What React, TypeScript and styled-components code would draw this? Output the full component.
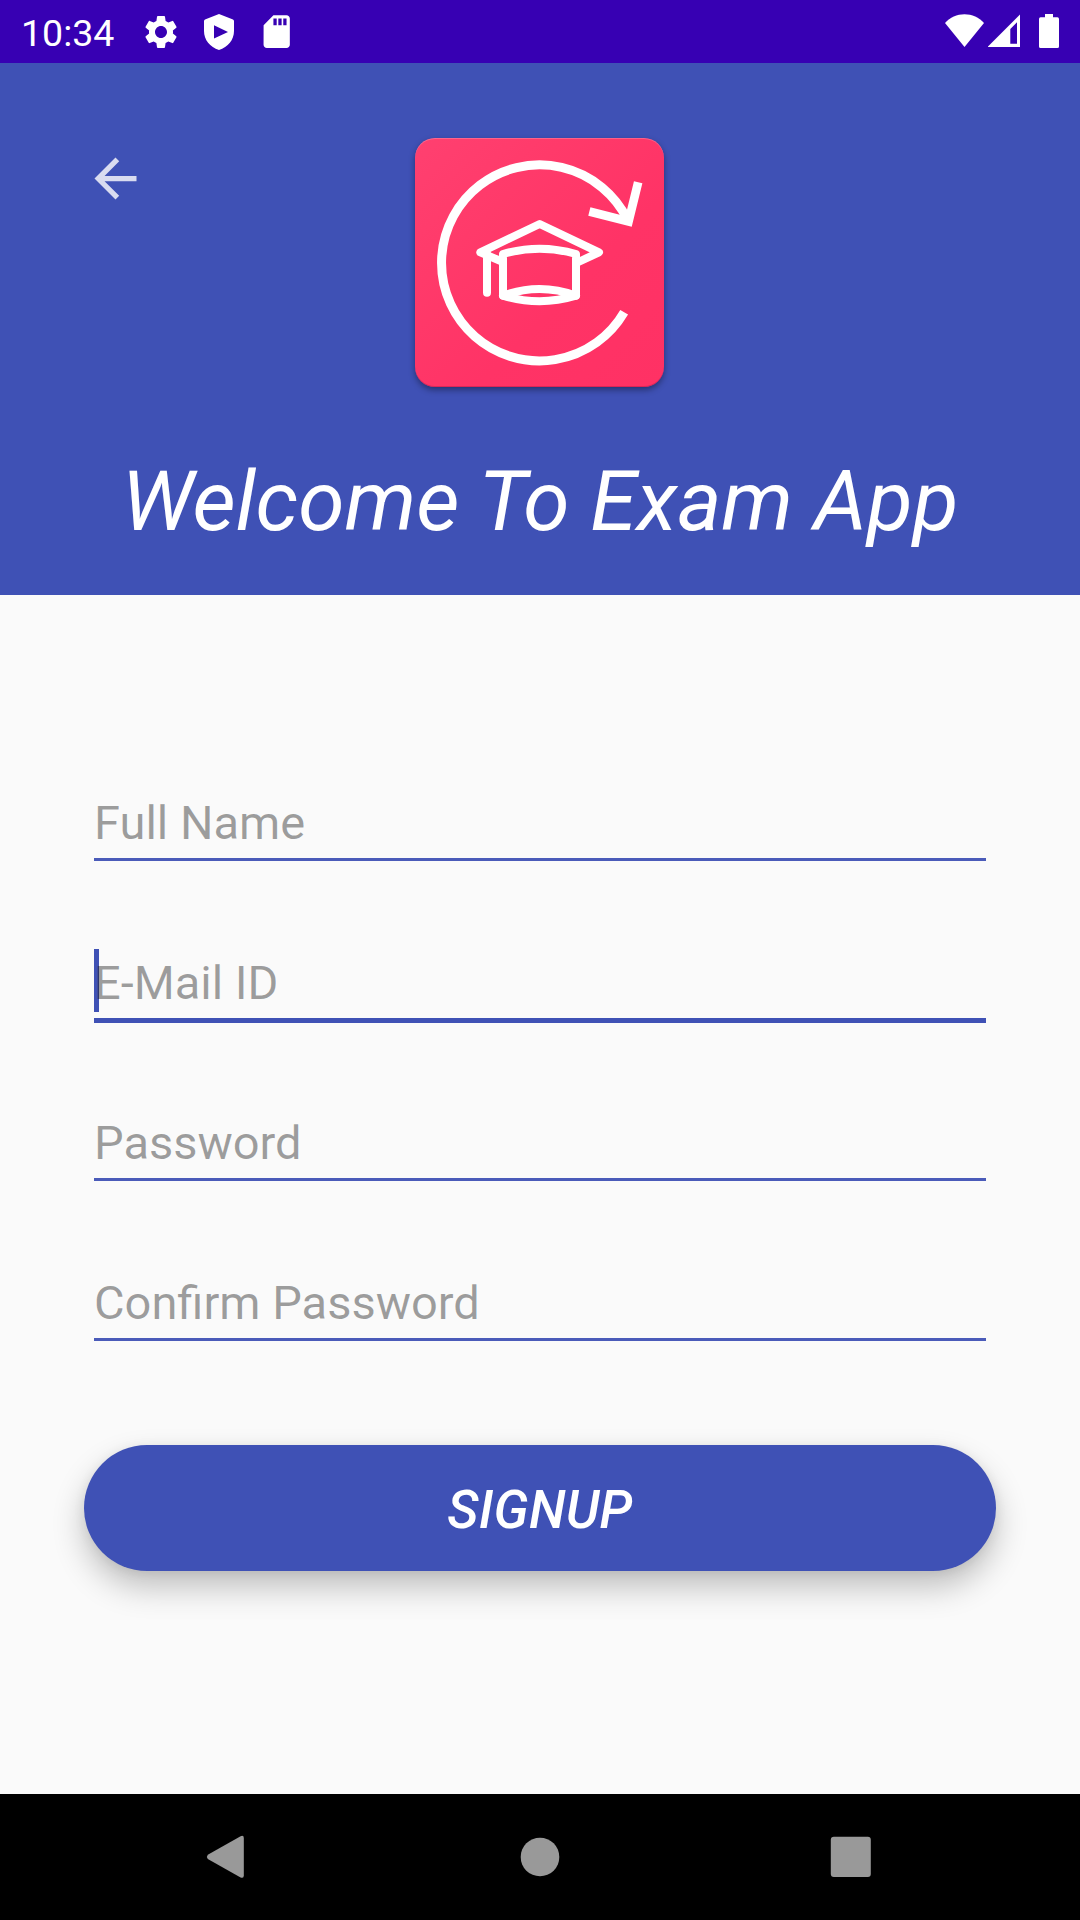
import React from "react";
import styled, { createGlobalStyle } from "styled-components";
import { MdArrowBack, MdSdCard, MdSettings } from "react-icons/md";

const indigo = "#3f51b5";

const GlobalStyle = createGlobalStyle`
  * { box-sizing: border-box; }
  body { margin: 0; background: #fafafa; }
`;

const Screen = styled.div`
  width: 1080px;
  height: 1920px;
  display: flex;
  flex-direction: column;
  overflow: hidden;
  background: #fafafa;
  font-family: Roboto, "Liberation Sans", sans-serif;
`;

const StatusBar = styled.div`
  flex: none;
  height: 63px;
  padding: 0 21px 0 21px;
  display: flex;
  justify-content: space-between;
  background: #3700b3;
  color: #fff;
`;

const StatusGroup = styled.div`
  display: flex;
  align-items: flex-start;
`;

const Clock = styled.span`
  width: 120px;
  padding-top: 11px;
  font-size: 37.5px;
  line-height: 44px;
`;

const StatusIcon = styled.span<{ $top: number; $gap?: number }>`
  display: flex;
  margin-top: ${(p) => p.$top}px;
  margin-right: ${(p) => p.$gap ?? 0}px;
`;

const Header = styled.header`
  flex: none;
  height: 532px;
  padding: 75px 84px 0;
  display: grid;
  grid-template-columns: 63px 1fr 63px;
  grid-template-rows: 249px auto;
  background: ${indigo};
`;

const BackButton = styled.button`
  width: 63px;
  height: 63px;
  margin-top: 9px;
  padding: 0;
  border: 0;
  background: none;
  color: #d9dcf0;
  display: flex;
`;

const LogoTile = styled.div`
  justify-self: center;
  width: 249px;
  height: 249px;
  margin-right: 1px;
  border-radius: 20px;
  background: linear-gradient(135deg, #ff4070 0%, #ff3a6a 30%, #ff3366 62%, #ff3164 100%);
  box-shadow: 0 3px 6px rgba(0, 0, 0, 0.38), inset 0 1px 0 rgba(255, 255, 255, 0.2),
    inset 0 -1px 0 rgba(120, 0, 40, 0.25);
`;

const Title = styled.h1`
  grid-column: 1 / -1;
  margin: 66px 0 0;
  text-align: center;
  white-space: nowrap;
  color: #fff;
  font-size: 84px;
  line-height: 98px;
  font-weight: 400;
  font-style: italic;
  letter-spacing: 0.05px;
`;

const Form = styled.form`
  flex: 1;
  padding: 186px 84px 0;
  display: flex;
  flex-direction: column;
`;

const Field = styled.label<{ $focused?: boolean }>`
  position: relative;
  flex: none;
  height: 160px;
  margin: 0 10px;
  display: flex;
  flex-direction: column;

  &::before {
    content: "";
    display: ${(p) => (p.$focused ? "block" : "none")};
    position: absolute;
    left: 0;
    top: 8px;
    width: 5px;
    height: 63px;
    background: ${indigo};
  }
`;

const Hint = styled.span`
  position: relative;
  height: 77px;
  padding-top: 14px;
  font-size: 47px;
  line-height: 56px;
  color: rgba(0, 0, 0, 0.38);
`;

const Underline = styled.span<{ $focused?: boolean }>`
  height: ${(p) => (p.$focused ? 5 : 3)}px;
  background: ${(p) => (p.$focused ? indigo : "#4a5bb9")};
`;

const SubmitButton = styled.button`
  flex: none;
  height: 126px;
  margin-top: 24px;
  padding: 4px 0 0;
  border: 0;
  border-radius: 63px;
  background: ${indigo};
  color: #fff;
  font: italic 500 53px/62px Roboto, "Liberation Sans", sans-serif;
  letter-spacing: 0.3px;
  box-shadow: 0 16px 32px rgba(0, 0, 0, 0.24), 0 2px 12px rgba(0, 0, 0, 0.07);
`;

const NavBar = styled.nav`
  flex: none;
  height: 126px;
  padding: 0 202px;
  display: flex;
  align-items: center;
  justify-content: space-between;
  background: #000;
`;

const ShieldIcon = () => (
  <svg width="30" height="36" viewBox="0 0 30 36">
    <path
      fill="#fff"
      fillRule="evenodd"
      d="M15 0 L29 5.5 Q30 6 30 7 V17 C30 26 24 33 15 36 C6 33 0 26 0 17 V7 Q0 6 1 5.5Z M10 11.2 V24.6 L24 17.9Z"
    />
  </svg>
);

const WifiIcon = () => (
  <svg width="40" height="34" viewBox="0 0 40 34">
    <path fill="#fff" d="M19.5 33 L0 9 C5 3.5 12 .2 19.5 .2 S34 3.5 39 9Z" />
  </svg>
);

const SignalIcon = () => (
  <svg width="33" height="34" viewBox="0 0 33 34">
    <path fill="#fff" fillRule="evenodd" d="M-.4 33 L32 .4 V33Z M22.3 15 V29.8 H29 V8.2Z" />
  </svg>
);

const BatteryIcon = () => (
  <svg width="20" height="34" viewBox="0 0 20 34">
    <path
      fill="#fff"
      d="M6 0 H14 V3.3 H18.4 Q20 3.3 20 5 V32.4 Q20 34 18.4 34 H1.6 Q0 34 0 32.4 V5 Q0 3.3 1.6 3.3 H6Z"
    />
  </svg>
);

const LogoArt = () => (
  <svg width="249" height="249" viewBox="45 54 747 747" fill="none" stroke="#fff">
    <path strokeWidth="27" d="M672.5 577 A294 294 0 1 1 682 298" />
    <path strokeWidth="26" d="M568 274.5 L685.7 304.7 L714.5 187" />
    <g strokeWidth="24" strokeLinecap="round" strokeLinejoin="round">
      <path strokeLinecap="butt" d="M309 426 L241 397 L419 312 L597 397 L529 429" />
      <path d="M261 402 V518" />
      <path d="M309 402 Q419 370 528 402 V527 Q419 560 309 527Z" />
      <path d="M309 527 Q419 487 528 527" />
    </g>
  </svg>
);

const BackTriangle = () => (
  <svg width="46" height="46" viewBox="0 0 46 46">
    <path
      fill="#999"
      d="M5.8 20.8 L38.6 2.2 Q41.8 .8 41.8 4 V41.6 Q41.8 44.8 38.6 43.4 L5.8 25 Q4 22.9 5.8 20.8Z"
    />
  </svg>
);

const HomeCircle = () => (
  <svg width="46" height="46" viewBox="0 0 46 46">
    <circle cx="23" cy="23" r="19.3" fill="#999" />
  </svg>
);

const RecentSquare = () => (
  <svg width="46" height="46" viewBox="-2 0 46 46">
    <rect x="-3.2" y="2.8" width="40" height="40.2" rx="3" fill="#999" overflow="visible" />
  </svg>
);

const RecentSlot = styled.span`
  display: flex;

  svg {
    overflow: visible;
  }
`;

const fields = [
  { label: "Full Name" },
  { label: "E-Mail ID", focused: true },
  { label: "Password" },
  { label: "Confirm Password" },
];

export default function App() {
  return (
    <Screen>
      <GlobalStyle />
      <StatusBar>
        <StatusGroup>
          <Clock>10:34</Clock>
          <StatusIcon $top={11.5} $gap={23}>
            <MdSettings size={40} />
          </StatusIcon>
          <StatusIcon $top={13.7} $gap={23.2}>
            <ShieldIcon />
          </StatusIcon>
          <StatusIcon $top={11.7}>
            <MdSdCard size={39.4} />
          </StatusIcon>
        </StatusGroup>
        <StatusGroup>
          <StatusIcon $top={14} $gap={3}>
            <WifiIcon />
          </StatusIcon>
          <StatusIcon $top={14} $gap={18}>
            <SignalIcon />
          </StatusIcon>
          <StatusIcon $top={14}>
            <BatteryIcon />
          </StatusIcon>
        </StatusGroup>
      </StatusBar>
      <Header>
        <BackButton type="button" aria-label="Back">
          <MdArrowBack size={63} />
        </BackButton>
        <LogoTile>
          <LogoArt />
        </LogoTile>
        <Title>Welcome To Exam App</Title>
      </Header>
      <Form>
        {fields.map((field) => (
          <Field key={field.label} $focused={field.focused}>
            <Hint>{field.label}</Hint>
            <Underline $focused={field.focused} />
          </Field>
        ))}
        <SubmitButton type="button">SIGNUP</SubmitButton>
      </Form>
      <NavBar>
        <BackTriangle />
        <HomeCircle />
        <RecentSlot>
          <RecentSquare />
        </RecentSlot>
      </NavBar>
    </Screen>
  );
}
